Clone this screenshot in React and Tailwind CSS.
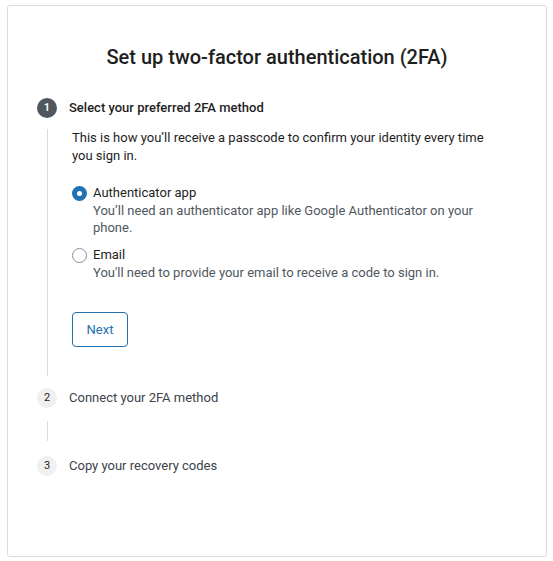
import React, { useState } from 'react';

const font = { fontFamily: 'Roboto, "Liberation Sans", sans-serif' };

const Radio = ({ checked, onClick }) => (
  <button
    type="button"
    onClick={onClick}
    className={`w-[15px] h-[15px] rounded-full flex items-center justify-center shrink-0 ${
      checked ? 'bg-[#2271b1]' : 'bg-white border border-[#8c8f94]'
    }`}
  >
    {checked && <span className="w-[5px] h-[5px] rounded-full bg-white" />}
  </button>
);

const StepBadge = ({ n, active }) => (
  <div
    className={`w-5 h-5 rounded-full flex items-center justify-center text-[11px] shrink-0 ${
      active ? 'bg-[#50575e] text-white font-semibold' : 'bg-[#f0f0f1] text-[#1e1e1e]'
    }`}
  >
    {n}
  </div>
);

const App = () => {
  const [method, setMethod] = useState('app');

  const options = [
    {
      id: 'app',
      label: 'Authenticator app',
      desc: 'You\u2019ll need an authenticator app like Google Authenticator on your phone.',
    },
    {
      id: 'email',
      label: 'Email',
      desc: "You'll need to provide your email to receive a code to sign in.",
    },
  ];

  return (
    <div className="w-full min-h-screen bg-white pt-[5px] pl-[7px]" style={font}>
      <div className="w-[540px] h-[552px] border border-[#dcdcde] rounded-[3px] bg-white px-[29px]">
        {/* Title */}
        <h1 className="pt-[37px] text-center text-[20px] leading-[28px] font-medium text-[#1e1e1e]">
          Set up two-factor authentication (2FA)
        </h1>

        {/* Step 1 */}
        <div className="mt-[27px]">
          <div className="flex items-center">
            <StepBadge n="1" active />
            <span className="ml-3 text-[13px] font-medium text-[#1e1e1e]">Select your preferred 2FA method</span>
          </div>
          <div className="flex mt-[11px]">
            <div className="w-5 flex justify-center shrink-0">
              <div className="w-px bg-[#dcdcde]" />
            </div>
            <div className="pl-[15px] pr-[20px] pb-[29px] text-[13px]">
              <p className="leading-[18px] text-[#1e1e1e]">
                This is how you’ll receive a passcode to confirm your identity every time you sign in.
              </p>
              <div className="mt-[19px] flex flex-col gap-[10px]">
                {options.map((o) => (
                  <div key={o.id} className="flex">
                    <div className="h-[18px] flex items-center">
                      <Radio checked={method === o.id} onClick={() => setMethod(o.id)} />
                    </div>
                    <div className="ml-[6px]">
                      <div className="leading-[18px] text-[#1e1e1e]">{o.label}</div>
                      <div className="leading-[17px] text-[#50575e]">{o.desc}</div>
                    </div>
                  </div>
                ))}
              </div>
              <button
                type="button"
                className="mt-[31px] w-[56px] h-[35px] border border-[#2271b1] rounded-[4px] text-[#2271b1] text-[13px] bg-white"
              >
                Next
              </button>
            </div>
          </div>
        </div>

        {/* Step 2 */}
        <div className="mt-[12px]">
          <div className="flex items-center">
            <StepBadge n="2" />
            <span className="ml-3 text-[13px] text-[#3c434a]">Connect your 2FA method</span>
          </div>
          <div className="flex mt-[13px] mb-[15px]">
            <div className="w-5 flex justify-center shrink-0">
              <div className="w-px h-[20px] bg-[#dcdcde]" />
            </div>
          </div>
        </div>

        {/* Step 3 */}
        <div className="flex items-center">
          <StepBadge n="3" />
          <span className="ml-3 text-[13px] text-[#3c434a]">Copy your recovery codes</span>
        </div>
      </div>
    </div>
  );
};

export default App;
